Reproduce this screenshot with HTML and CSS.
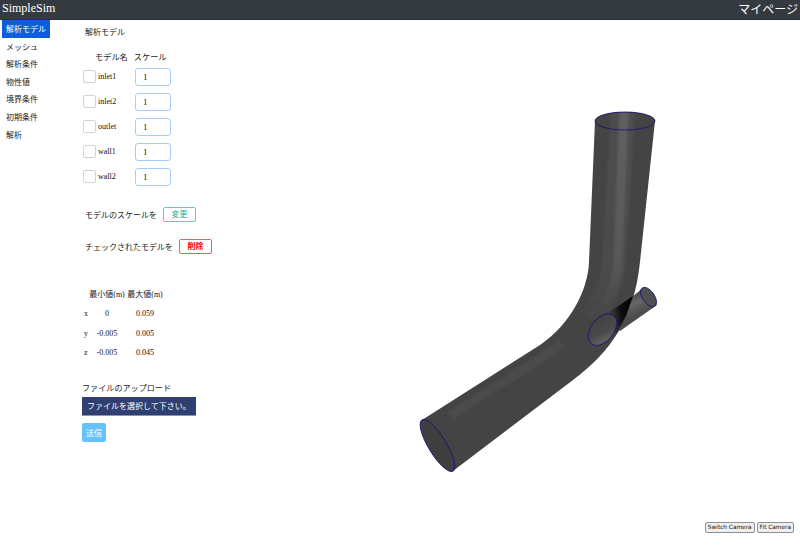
FILE: index.html
```html
<!DOCTYPE html>
<html lang="ja">
<head>
<meta charset="utf-8">
<title>SimpleSim</title>
<link rel="stylesheet" href="styles.css">
</head>
<body>
<header class="topbar">
  <span class="brand">SimpleSim</span>
  <span class="mypage">マイページ</span>
</header>
<div class="layout">
  <nav class="sidenav">
    <a class="navitem active">解析モデル</a>
    <a class="navitem">メッシュ</a>
    <a class="navitem">解析条件</a>
    <a class="navitem">物性値</a>
    <a class="navitem">境界条件</a>
    <a class="navitem">初期条件</a>
    <a class="navitem">解析</a>
  </nav>
  <main class="panel">
    <h2 class="title">解析モデル</h2>
    <div class="model-head"><span>モデル名</span><span>スケール</span></div>
    <div class="model-row"><span class="check"></span><span class="mname">inlet1</span><input class="scale" value="1"></div>
    <div class="model-row"><span class="check"></span><span class="mname">inlet2</span><input class="scale" value="1"></div>
    <div class="model-row"><span class="check"></span><span class="mname">outlet</span><input class="scale" value="1"></div>
    <div class="model-row"><span class="check"></span><span class="mname">wall1</span><input class="scale" value="1"></div>
    <div class="model-row"><span class="check"></span><span class="mname">wall2</span><input class="scale" value="1"></div>
    <div class="action first"><span>モデルのスケールを</span><button class="btn teal">変更</button></div>
    <div class="action second"><span>チェックされたモデルを</span><button class="btn red">削除</button></div>
    <div class="bounds">
      <span></span><span class="bh">最小値(m)</span><span class="bh">最大値(m)</span>
      <span>x</span><span class="c">0</span><span class="c">0.059</span>
      <span>y</span><span class="c">-0.005</span><span class="c">0.005</span>
      <span>z</span><span class="c">-0.005</span><span class="c">0.045</span>
    </div>
    <div class="upload-label">ファイルのアップロード</div>
    <div class="filebar">ファイルを選択して下さい。</div>
    <button class="send">送信</button>
  </main>
  <section class="viewer">
    <svg class="scene" viewBox="320 20 480 527" width="480" height="527" aria-hidden="true">
      <defs>
        <linearGradient id="hl" gradientUnits="userSpaceOnUse" x1="622" y1="125" x2="600" y2="310">
          <stop offset="0" stop-color="#5f5f5f"/>
          <stop offset="0.7" stop-color="#595959"/>
          <stop offset="1" stop-color="#4a4a4a"/>
        </linearGradient>
        <linearGradient id="hlw" gradientUnits="userSpaceOnUse" x1="622" y1="125" x2="600" y2="310">
          <stop offset="0" stop-color="#4e4e4e"/>
          <stop offset="0.7" stop-color="#4c4c4c"/>
          <stop offset="1" stop-color="#474747"/>
        </linearGradient>
        <linearGradient id="dark" gradientUnits="userSpaceOnUse" x1="606" y1="316" x2="632" y2="312">
          <stop offset="0" stop-color="#555"/>
          <stop offset="0.55" stop-color="#111"/>
          <stop offset="1" stop-color="#000"/>
        </linearGradient>
        <linearGradient id="shaft" gradientUnits="userSpaceOnUse" x1="637" y1="292" x2="646" y2="310">
          <stop offset="0" stop-color="#4a4a4a"/>
          <stop offset="0.45" stop-color="#666"/>
          <stop offset="1" stop-color="#4c4c4c"/>
        </linearGradient>
        <linearGradient id="face" gradientUnits="userSpaceOnUse" x1="610" y1="316" x2="598" y2="344">
          <stop offset="0" stop-color="#404040"/>
          <stop offset="0.6" stop-color="#4a4a4a"/>
          <stop offset="1" stop-color="#6a6a6a"/>
        </linearGradient>
        <filter id="soft"><feGaussianBlur stdDeviation="1"/></filter>
        <clipPath id="bodyclip"><path d="M595 121 A30 9 0 0 1 655 121 L640 262 C634 320 610 352 573 380 L453 471 L422 420 L540 345 C570 325 588 290 589 262 Z"/></clipPath>
      </defs>
      <path class="pipe" d="M595 121 A30 9 0 0 1 655 121 L640 262 C634 320 610 352 573 380 L453 471 L422 420 L540 345 C570 325 588 290 589 262 Z"/>
      <ellipse class="end-top-fill" cx="625" cy="121" rx="30" ry="9"/>
      <ellipse class="end-bottom" cx="437.5" cy="445.5" rx="30" ry="9" transform="rotate(58.7 437.5 445.5)"/>
      <g clip-path="url(#bodyclip)" filter="url(#soft)">
        <path class="hl-wide" d="M623 112 L614 262 C612 285 604 302 590 318"/>
        <path class="hl-narrow" d="M624 112 L618 262 C617 280 612 292 606 304"/>
        <path class="hl-low" d="M562 344 L500 384 L450 416"/>
      </g>
      <ellipse class="end-line" cx="625" cy="121" rx="30" ry="9"/>
      <path class="branch-shaft" d="M632 297 L643 288 L657 305 L620 331 L612 325 Z"/>
      <path class="branch-dark" d="M608 313 L633 296 L626 316 L616 334 Z"/>
      <ellipse class="end-big" cx="602.5" cy="329.5" rx="18" ry="11.5" transform="rotate(-52 602.5 329.5)"/>
      <ellipse class="end-small" cx="648.5" cy="297" rx="11" ry="6" transform="rotate(55 648.5 297)"/>
    </svg>
    <div class="camera">
      <button class="cam">Switch Camera</button>
      <button class="cam">Fit Camera</button>
    </div>
  </section>
</div>
</body>
</html>
```
FILE: styles.css
```css
* { box-sizing: border-box; }
html, body { margin: 0; height: 100%; }
body {
  font-family: "Liberation Serif", "Noto Sans CJK JP", serif;
  font-size: 8px;
  color: #222;
  background: #fff;
  overflow: hidden;
}
.topbar {
  height: 20px;
  background: #343a40;
  color: #fff;
  display: flex;
  justify-content: space-between;
  align-items: center;
  padding: 0 2px 2px 2px;
  border-bottom: 1px solid #2c3035;
}
.brand { font-size: 12px; }
.mypage { font-size: 12px; font-family: "Noto Sans CJK JP", sans-serif; line-height: 18px; }
.layout { display: flex; height: 527px; }
.sidenav {
  width: 62px;
  padding: 0 0 0 2px;
  display: flex;
  flex-direction: column;
  flex: none;
}
.navitem {
  display: block;
  width: 48px;
  height: 17.6px;
  line-height: 17px;
  padding-left: 4px;
  color: #222;
  white-space: nowrap;
  font-family: "Noto Sans CJK JP", sans-serif;
}
.navitem.active { background: #0d5ed9; color: #fff; }
.panel { width: 258px; flex: none; padding-left: 20px; display: flex; flex-direction: column; align-items: flex-start; }
.title {
  margin: 6px 0 0 3px;
  height: 12px;
  font-size: 8px;
  line-height: 12px;
  font-weight: normal;
  font-family: "Noto Sans CJK JP", sans-serif;
}
.model-head {
  margin: 12px 0 0 13px;
  display: flex;
  gap: 6px;
  height: 12px;
  line-height: 12px;
  font-size: 8.2px;
  font-family: "Noto Sans CJK JP", sans-serif;
}
.model-row {
  height: 25px;
  display: flex;
  align-items: center;
  margin-left: 1px;
}
.model-head + .model-row { margin-top: 2px; }
.check {
  width: 13px;
  height: 13px;
  margin-top: -1px;
  border: 1px solid #ced4da;
  border-radius: 2px;
  background: #fff;
}
.mname { width: 37px; margin-left: 2px; margin-top: 0; font-size: 8px; color: #111; }
.scale {
  width: 36px;
  height: 18px;
  border: 1px solid #a9cbf7;
  border-radius: 3px;
  padding: 0 7px;
  font: 9px "Liberation Serif", serif;
  color: #222;
  background: #fff;
}
.action { display: flex; align-items: center; gap: 6px; margin-left: 3px; height: 16px; font-family: "Noto Sans CJK JP", sans-serif; }
.action.first { margin-top: 17px; }
.action.second { margin-top: 16px; }
.btn {
  width: 33px;
  height: 15px;
  padding: 0;
  background: #fff;
  border-radius: 2px;
  font: 8px "Noto Sans CJK JP", sans-serif;
  line-height: 12px;
}
.btn.teal { border: 1px solid #5fcdb7; color: #20b294; }
.btn.red { border: 1px solid #f25c5c; color: #f00; font-weight: 700; }
.bounds {
  margin: 30px 0 0 2px;
  display: grid;
  grid-template-columns: 4px 38px 38px;
  grid-template-rows: 19px 20px 20px 19.5px;
  align-items: center;
  font-size: 8px;
  color: #111;
}
.bounds .bh { white-space: nowrap; text-align: center; }
.bounds .c { text-align: center; }
.upload-label { margin-top: 18.5px; height: 13px; line-height: 13px; font-size: 8.1px; font-family: "Noto Sans CJK JP", sans-serif; }
.filebar {
  margin-top: 3px;
  width: 114px;
  height: 19px;
  background: #2f3f72;
  color: #fff;
  line-height: 18px;
  padding-left: 5px;
  border-bottom: 1px solid #8b94b0;
  white-space: nowrap;
  font-family: "Noto Sans CJK JP", sans-serif;
}
.send {
  margin-top: 7px;
  width: 24px;
  height: 19px;
  padding: 0;
  border: none;
  border-radius: 2px;
  background: #66c2ff;
  color: #fff;
  font: 8px "Noto Sans CJK JP", sans-serif;
}
.viewer { position: relative; flex: 1; }
.scene { display: block; }
.camera { position: absolute; right: 6px; bottom: 14px; display: flex; gap: 2px; }
.cam {
  height: 11px;
  padding: 0 2px;
  font: 5.8px "DejaVu Sans", sans-serif;
  line-height: 9px;
  color: #111;
  background: #efefef;
  border: 1px solid #8f8f8f;
  border-radius: 2px;
  white-space: nowrap;
}
.pipe { fill: #444; }
.hl-wide { fill: none; stroke: url(#hlw); stroke-width: 24; }
.hl-narrow { fill: none; stroke: url(#hl); stroke-width: 9; }
.hl-low { fill: none; stroke: #4c4c4c; stroke-width: 9; }
.end-top-fill { fill: #444; }
.end-line { fill: none; stroke: #12127a; stroke-width: 0.8; }
.end-bottom { fill: #3f3f3f; stroke: #12127a; stroke-width: 0.8; }
.branch-shaft { fill: url(#shaft); }
.branch-dark { fill: url(#dark); }
.end-big { fill: url(#face); stroke: #12127a; stroke-width: 0.8; }
.end-small { fill: #505050; stroke: #12127a; stroke-width: 0.8; }
```
